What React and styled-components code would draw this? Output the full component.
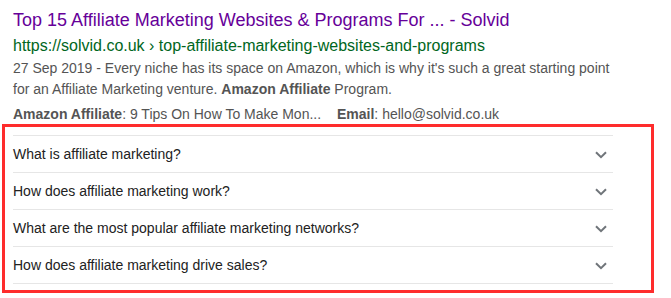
import React from 'react'
import styled, { createGlobalStyle } from 'styled-components'

const GlobalStyle = createGlobalStyle`
    body {
        margin: 0;
        background: #fff;
        font-family: Arial, "Liberation Sans", sans-serif;
    }
`

const questions = [
    'What is affiliate marketing?',
    'How does affiliate marketing work?',
    'What are the most popular affiliate marketing networks?',
    'How does affiliate marketing drive sales?',
]

const Chevron = () => (
    <svg width="12" height="8" viewBox="0 0 12 8">
        <path d="M1 1.2 L6 6.2 L11 1.2" fill="none" stroke="#70757a" strokeWidth="2" />
    </svg>
)

const App = () => {
    return (
        <PAGE>
            <GlobalStyle />
            <RESULT>
                <TITLE href="#">Top 15 Affiliate Marketing Websites &amp; Programs For ... - Solvid</TITLE>
                <URL>https://solvid.co.uk › top-affiliate-marketing-websites-and-programs</URL>
                <SNIPPET>
                    27 Sep 2019 - Every niche has its space on Amazon, which is why it's such a great starting point
                    <br />
                    for an Affiliate Marketing venture. <b>Amazon Affiliate</b> Program.
                </SNIPPET>
                <SITELINKS>
                    <SITELINK><b>Amazon Affiliate</b>: 9 Tips On How To Make Mon...</SITELINK>
                    <SITELINK><b>Email</b>: hello@solvid.co.uk</SITELINK>
                </SITELINKS>
            </RESULT>
            <HIGHLIGHT>
                <LIST>
                    {questions.map((q) => (
                        <ROW key={q}>
                            <QUESTION>{q}</QUESTION>
                            <Chevron />
                        </ROW>
                    ))}
                </LIST>
            </HIGHLIGHT>
        </PAGE>
    )
}

const PAGE = styled.div`
    width: 671px;
    height: 298px;
    overflow: hidden;
`
const RESULT = styled.div`
    padding-left: 13px;
    padding-top: 7px;
`
const TITLE = styled.a`
    display: block;
    color: #660099;
    font-size: 18px;
    line-height: 26px;
    text-decoration: none;
    white-space: nowrap;
`
const URL = styled.div`
    color: #006621;
    font-size: 16px;
    line-height: 25px;
    white-space: nowrap;
`
const SNIPPET = styled.div`
    color: #545454;
    font-size: 14px;
    line-height: 21px;
    white-space: nowrap;
    b {
        font-weight: bold;
    }
`
const SITELINKS = styled.div`
    display: grid;
    grid-template-columns: 324px auto;
    margin-top: 5px;
    height: 19px;
`
const SITELINK = styled.div`
    color: #545454;
    font-size: 14px;
    line-height: 19px;
    white-space: nowrap;
`
const HIGHLIGHT = styled.div`
    margin-left: 2px;
    width: 652px;
    border: 3px solid #fe2c2c;
    padding: 8px 38px 7px 8px;
    box-sizing: border-box;
    height: 169px;
`
const LIST = styled.div`
    border-bottom: 1px solid #e6e6e6;
`
const ROW = styled.div`
    display: flex;
    align-items: center;
    justify-content: space-between;
    height: 36px;
    border-top: 1px solid #e6e6e6;
    padding-right: 6px;
    svg {
        margin-top: 1px;
    }
`
const QUESTION = styled.div`
    color: #222;
    font-size: 14px;
`

export default App
